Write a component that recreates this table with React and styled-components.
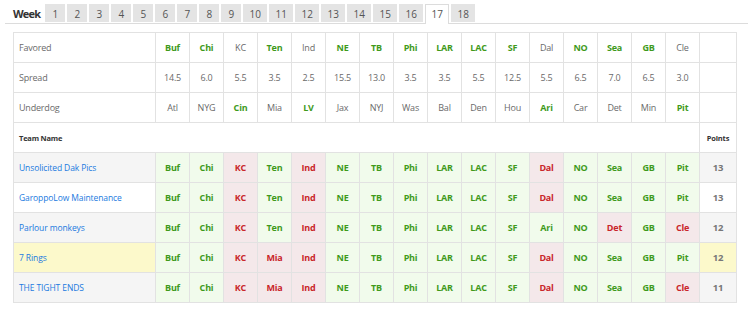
import React from 'react';
import styled, { createGlobalStyle } from 'styled-components';

const GlobalStyle = createGlobalStyle`
  body {
    margin: 0;
    background: #fff;
    font-family: "Open Sans", "Liberation Sans", sans-serif;
  }
`;

const Page = styled.div`
  width: 748px;
  height: 314px;
  overflow: hidden;
`;

const TabBar = styled.div`
  display: flex;
  align-items: flex-end;
  gap: 2px;
  margin: 4px 0 0 5px;
  padding-left: 8px;
  border-bottom: 1px solid #dcdcdc;
  height: 19px;
`;

const WeekLabel = styled.div`
  font-size: 11px;
  font-weight: 700;
  color: #333;
  letter-spacing: -0.8px;
  align-self: center;
  margin-right: 3px;
  line-height: 18px;
`;

const Tab = styled.div`
  width: ${(p) => (p.wide ? '24px' : '20px')};
  box-sizing: border-box;
  text-align: center;
  font-size: 10px;
  color: #555;
  background: ${(p) => (p.active ? '#fff' : '#e4e4e4')};
  border: 1px solid ${(p) => (p.active ? '#dcdcdc' : '#e4e4e4')};
  border-bottom: none;
  height: ${(p) => (p.active ? '20px' : '18px')};
  margin-bottom: ${(p) => (p.active ? '-1px' : '1px')};
  line-height: ${(p) => (p.active ? '19px' : '18px')};
`;

const Table = styled.table`
  margin: 8px 0 0 13px;
  border-collapse: collapse;
  table-layout: fixed;
  width: 723px;
  font-size: 9px;
  letter-spacing: -0.2px;
`;

const Cell = styled.td`
  height: 29px;
  padding: 0;
  border: 1px solid #e2e2e2;
  text-align: center;
  color: ${(p) => (p.tone === 'win' ? '#3f9a1c' : p.tone === 'loss' ? '#c9262b' : '#6a6a6a')};
  font-weight: ${(p) => (p.tone ? 700 : 400)};
  background: ${(p) =>
    p.tone === 'win' && p.pick ? '#f1fbec' : p.tone === 'loss' && p.pick ? '#f4e8ea' : 'transparent'};
`;

const LabelCell = styled.td`
  height: 29px;
  padding: 0 0 0 5px;
  border: 1px solid #e2e2e2;
  color: #6a6a6a;
  text-align: left;
`;

const HeadCell = styled.th`
  height: 29px;
  padding: ${(p) => (p.left ? '0 0 0 5px' : '0')};
  border: 1px solid #e2e2e2;
  font-size: 7.5px;
  font-weight: 700;
  color: #333;
  text-align: ${(p) => (p.left ? 'left' : 'center')};
`;

const rowBg = (p) => (p.highlight ? '#fcf9cb' : p.odd ? '#f5f5f5' : '#fff');

const NameCell = styled.td`
  height: 29px;
  padding: 0 0 0 5px;
  border: 1px solid #e2e2e2;
  font-size: 8.5px;
  letter-spacing: -0.1px;
  color: #1b7ae0;
  text-align: left;
  background: ${rowBg};
  white-space: nowrap;
`;

const PointsCell = styled.td`
  height: 29px;
  padding: 0;
  border: 1px solid #e2e2e2;
  font-size: 9.5px;
  font-weight: 700;
  color: #777;
  text-align: center;
  background: ${rowBg};
`;

const weeks = Array.from({ length: 18 }, (_, i) => i + 1);

const games = [
  ['Buf', '14.5', 'Atl', 'f'],
  ['Chi', '6.0', 'NYG', 'f'],
  ['KC', '5.5', 'Cin', 'u'],
  ['Ten', '3.5', 'Mia', 'f'],
  ['Ind', '2.5', 'LV', 'u'],
  ['NE', '15.5', 'Jax', 'f'],
  ['TB', '13.0', 'NYJ', 'f'],
  ['Phi', '3.5', 'Was', 'f'],
  ['LAR', '3.5', 'Bal', 'f'],
  ['LAC', '5.5', 'Den', 'f'],
  ['SF', '12.5', 'Hou', 'f'],
  ['Dal', '5.5', 'Ari', 'u'],
  ['NO', '6.5', 'Car', 'f'],
  ['Sea', '7.0', 'Det', 'f'],
  ['GB', '6.5', 'Min', 'f'],
  ['Cle', '3.0', 'Pit', 'u'],
];

const winners = games.map((g) => (g[3] === 'f' ? g[0] : g[2]));

const teams = [
  { name: 'Unsolicited Dak Pics', points: 13, picks: ['Buf', 'Chi', 'KC', 'Ten', 'Ind', 'NE', 'TB', 'Phi', 'LAR', 'LAC', 'SF', 'Dal', 'NO', 'Sea', 'GB', 'Pit'] },
  { name: 'GaroppoLow Maintenance', points: 13, picks: ['Buf', 'Chi', 'KC', 'Ten', 'Ind', 'NE', 'TB', 'Phi', 'LAR', 'LAC', 'SF', 'Dal', 'NO', 'Sea', 'GB', 'Pit'] },
  { name: 'Parlour monkeys', points: 12, picks: ['Buf', 'Chi', 'KC', 'Ten', 'Ind', 'NE', 'TB', 'Phi', 'LAR', 'LAC', 'SF', 'Ari', 'NO', 'Det', 'GB', 'Cle'] },
  { name: '7 Rings', points: 12, highlight: true, picks: ['Buf', 'Chi', 'KC', 'Mia', 'Ind', 'NE', 'TB', 'Phi', 'LAR', 'LAC', 'SF', 'Dal', 'NO', 'Sea', 'GB', 'Pit'] },
  { name: 'THE TIGHT ENDS', points: 11, picks: ['Buf', 'Chi', 'KC', 'Mia', 'Ind', 'NE', 'TB', 'Phi', 'LAR', 'LAC', 'SF', 'Dal', 'NO', 'Sea', 'GB', 'Cle'] },
];

export default function App() {
  return (
    <Page>
      <GlobalStyle />
      <TabBar>
        <WeekLabel>Week</WeekLabel>
        {weeks.map((w) => (
          <Tab key={w} active={w === 17} wide={w > 9}>
            {w}
          </Tab>
        ))}
      </TabBar>
      <Table>
        <colgroup>
          <col style={{ width: 142 }} />
          {games.map((g) => (
            <col key={g[0]} style={{ width: 34 }} />
          ))}
          <col style={{ width: 37 }} />
        </colgroup>
        <tbody>
          <tr>
            <LabelCell>Favored</LabelCell>
            {games.map((g) => (
              <Cell key={g[0]} tone={g[3] === 'f' ? 'win' : undefined}>
                {g[0]}
              </Cell>
            ))}
            <Cell />
          </tr>
          <tr>
            <LabelCell>Spread</LabelCell>
            {games.map((g) => (
              <Cell key={g[0]}>{g[1]}</Cell>
            ))}
            <Cell />
          </tr>
          <tr>
            <LabelCell>Underdog</LabelCell>
            {games.map((g) => (
              <Cell key={g[0]} tone={g[3] === 'u' ? 'win' : undefined}>
                {g[2]}
              </Cell>
            ))}
            <Cell />
          </tr>
          <tr>
            <HeadCell left colSpan={17}>Team Name</HeadCell>
            <HeadCell>Points</HeadCell>
          </tr>
          {teams.map((t, i) => (
            <tr key={t.name}>
              <NameCell odd={i % 2 === 0} highlight={t.highlight}>
                {t.name}
              </NameCell>
              {t.picks.map((p, j) => (
                <Cell key={j} pick tone={p === winners[j] ? 'win' : 'loss'}>
                  {p}
                </Cell>
              ))}
              <PointsCell odd={i % 2 === 0} highlight={t.highlight}>
                {t.points}
              </PointsCell>
            </tr>
          ))}
        </tbody>
      </Table>
    </Page>
  );
}
